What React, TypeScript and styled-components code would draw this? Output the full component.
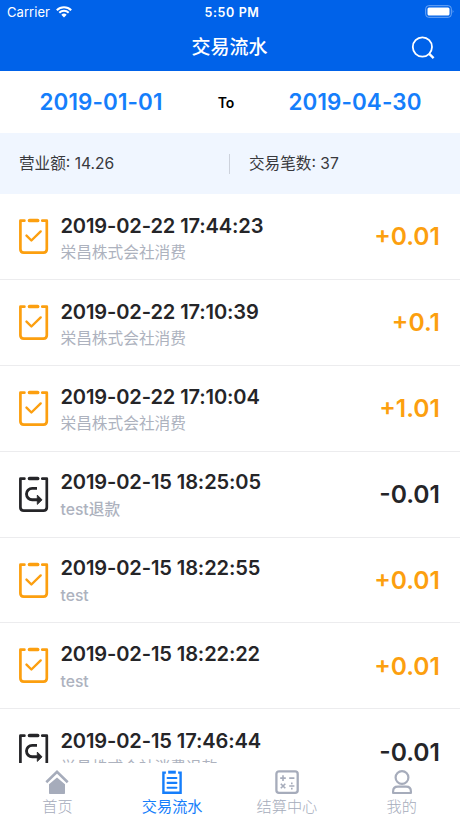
import React from 'react';
import styled, { createGlobalStyle } from 'styled-components';

const ORANGE = '#fc9f0f';
const INK = '#252528';
const MUTED = '#adb2be';
const BLUE = '#157efb';

const GlobalStyle = createGlobalStyle`
  * { box-sizing: border-box; }
  body { margin: 0; background: #fff; }
`;

const Screen = styled.div`
  width: 460px;
  height: 818px;
  overflow: hidden;
  display: flex;
  flex-direction: column;
  background: #fff;
  font-family: Inter, 'Noto Sans CJK SC', sans-serif;
  white-space: nowrap;
`;

const Header = styled.header`
  height: 71px;
  flex: none;
  background: #0062e9;
  color: #fff;
`;

const StatusBar = styled.div`
  height: 24px;
  display: grid;
  grid-template-columns: 1fr auto 1fr;
  align-items: center;
  padding: 0 5px 0 7px;
  font-size: 13px;
`;

const Carrier = styled.div`
  display: flex;
  align-items: center;
  gap: 6px;
  letter-spacing: 0.05px;
`;

const Clock = styled.div`
  font-weight: 600;
  font-size: 12.5px;
  letter-spacing: 0.6px;
  margin-left: 2px;
`;

const Battery = styled.svg`
  justify-self: end;
  margin-top: -2px;
`;

const TitleBar = styled.div`
  height: 47px;
  display: grid;
  grid-template-columns: 1fr auto 1fr;
  align-items: center;
  padding-right: 25px;
  padding-left: 24px;
`;

const Title = styled.h1`
  grid-column: 2;
  margin: 0;
  font-size: 19px;
  line-height: 28px;
  font-weight: 500;
`;

const SearchIcon = styled.svg`
  justify-self: end;
`;

const DateRange = styled.div`
  height: 62px;
  flex: none;
  display: grid;
  grid-template-columns: 202px 48px 1fr;
  align-items: center;
  text-align: center;
`;

const RangeDate = styled.span`
  color: ${BLUE};
  font-size: 22.4px;
  font-weight: 600;
  letter-spacing: 0.12px;
  line-height: 26px;
  margin-top: -1px;
`;

const RangeTo = styled.span`
  font-size: 14px;
  font-weight: 600;
  color: #000;
`;

const Summary = styled.div`
  height: 61px;
  flex: none;
  display: flex;
  align-items: center;
  background: #f0f6ff;
  color: #38393d;
  font-size: 15.6px;
`;

const SummaryCell = styled.div<{ $divided?: boolean }>`
  width: ${p => (p.$divided ? 231 : 229)}px;
  height: 20px;
  line-height: 20px;
  padding-left: 19px;
  border-left: ${p => (p.$divided ? '1px solid #cdd2dc' : '0')};
`;

const List = styled.main`
  flex: 1;
  min-height: 0;
  overflow: hidden;
`;

const Row = styled.article`
  height: 85.9px;
  display: flex;
  align-items: center;
  padding: 0 20px 0 19px;
  border-bottom: 1px solid #ececee;
`;

const Details = styled.div<{ $latin: boolean }>`
  flex: 1;
  align-self: flex-start;
  padding: ${p => (p.$latin ? 17.3 : 18.7)}px 0 0 12px;
`;

const Time = styled.div`
  color: ${INK};
  font-size: 20.1px;
  line-height: 26px;
  font-weight: 600;
  letter-spacing: -0.13px;
  margin-left: -0.6px;
`;

const Note = styled.div<{ $latin: boolean }>`
  color: ${MUTED};
  font-size: 15.7px;
  line-height: ${p => (p.$latin ? 29 : 27)}px;
  font-weight: ${p => (p.$latin ? 500 : 400)};
  margin-left: -0.5px;
`;

const Amount = styled.div<{ $refund: boolean }>`
  color: ${p => (p.$refund ? INK : ORANGE)};
  font-size: 24.6px;
  font-weight: 600;
`;

const TabBar = styled.nav`
  height: 55px;
  flex: none;
  display: grid;
  grid-template-columns: repeat(4, 1fr);
  padding-right: 1px;
`;

const Tab = styled.div<{ $active?: boolean }>`
  display: flex;
  flex-direction: column;
  align-items: center;
  padding-top: 6px;
  color: ${p => (p.$active ? BLUE : '#a6acbb')};
  font-size: 15.2px;
  line-height: 22px;
`;

const TabLabel = styled.span<{ $active?: boolean }>`
  margin-top: 1px;
  font-weight: ${p => (p.$active ? 400 : 300)};
`;

function Clipboard({ refund }: { refund: boolean }) {
  const color = refund ? INK : ORANGE;
  return (
    <svg width="30" height="37" viewBox="0 0 30 37" fill="none" stroke={color} strokeWidth="2.7" strokeLinecap="round" strokeLinejoin="round">
      <path d="M5.4 2.7H1.4v28.6q0 3.4 3.4 3.4h19.6q3.4 0 3.4-3.4V2.7h-4.5" />
      <path d="M10.6 2.5h8" strokeWidth="3.7" />
      {refund ? (
        <>
          <path d="M18 12.4h-4.8a5.7 5.7 0 0 0 0 11.4h6" strokeWidth="2.9" strokeLinecap="butt" />
          <path d="M18.6 19.4l4.4 4.4-4.4 4.3z" fill={color} strokeWidth="1" />
        </>
      ) : (
        <path d="M7.5 17.6l4.9 4.9 9.3-9.1" strokeWidth="2.4" />
      )}
    </svg>
  );
}

const HomeIcon = () => (
  <svg width="24" height="26" viewBox="0 0 24 26">
    <path d="M1.3 13.2L12 2.8l10.7 10.4" fill="none" stroke="currentColor" strokeWidth="2.6" />
    <path d="M4 15.2l8-6.8 8 6.8v9q0 .8-.8.8H4.8q-.8 0-.8-.8z" fill="currentColor" />
  </svg>
);

const RecordsIcon = () => (
  <svg width="24" height="26" viewBox="0 0 24 26" fill="none" stroke="currentColor" strokeWidth="2.4">
    <path d="M5.9 3.6H3.4v20.2h17.2V3.6h-2.5" />
    <path d="M8.2 3.2h7.6" strokeWidth="3" />
    <path d="M7.6 9h8.8M7.6 13.9h8.8M7.6 18.8h8.8" strokeLinecap="round" strokeWidth="2.1" />
  </svg>
);

const SettleIcon = () => (
  <svg width="24" height="26" viewBox="0 0 24 26" fill="none" stroke="currentColor" strokeWidth="1.6">
    <rect x="1.4" y="2.3" width="21.3" height="21.6" rx="2.6" strokeWidth="2.3" />
    <path d="M8 6.3v5.6M5.2 9.1h5.6M14.2 9.1h5.2M5.8 14.7l4.5 4.5m0-4.5l-4.5 4.5M14.2 17h5.2M16 14.4h1.6M16 19.6h1.6" />
  </svg>
);

const ProfileIcon = () => (
  <svg width="24" height="26" viewBox="0 0 24 26" fill="none" stroke="currentColor" strokeWidth="2.2">
    <circle cx="12" cy="8.5" r="6.4" />
    <path d="M3.1 24v-1.5c0-3.2 1.7-4.8 4.7-4.8h8.4c3 0 4.7 1.6 4.7 4.8V24z" strokeLinejoin="round" />
  </svg>
);

const transactions = [
  { time: '2019-02-22 17:44:23', note: '栄昌株式会社消费', amount: '+0.01' },
  { time: '2019-02-22 17:10:39', note: '栄昌株式会社消费', amount: '+0.1' },
  { time: '2019-02-22 17:10:04', note: '栄昌株式会社消费', amount: '+1.01' },
  { time: '2019-02-15 18:25:05', note: 'test退款', amount: '-0.01' },
  { time: '2019-02-15 18:22:55', note: 'test', amount: '+0.01' },
  { time: '2019-02-15 18:22:22', note: 'test', amount: '+0.01' },
  { time: '2019-02-15 17:46:44', note: '栄昌株式会社消费退款', amount: '-0.01' },
];

const tabs = [
  { label: '首页', Icon: HomeIcon },
  { label: '交易流水', Icon: RecordsIcon, active: true },
  { label: '结算中心', Icon: SettleIcon },
  { label: '我的', Icon: ProfileIcon },
];

export default function App() {
  return (
    <Screen>
      <GlobalStyle />
      <Header>
        <StatusBar>
          <Carrier>
            Carrier
            <svg width="16" height="12" viewBox="0 0 16 12" fill="none" stroke="#fff" strokeWidth="2">
              <path d="M.8 4.2a10.2 10.2 0 0 1 14.4 0M3.3 6.8a6.6 6.6 0 0 1 9.4 0" />
              <path d="M5.3 8.7a3.9 3.9 0 0 1 5.4 0L8 11.5z" fill="#fff" stroke="none" />
            </svg>
          </Carrier>
          <Clock>5:50 PM</Clock>
          <Battery width="30" height="13" viewBox="0 0 30 13">
            <rect x=".7" y=".7" width="25.6" height="11.6" rx="3" fill="none" stroke="#6fa8f5" />
            <rect x="2.5" y="2.4" width="22" height="8.2" rx="1.5" fill="#fff" />
            <path d="M27.7 4.8q1.8 1.7 0 3.4z" fill="#6fa8f5" />
          </Battery>
        </StatusBar>
        <TitleBar>
          <Title>交易流水</Title>
          <SearchIcon width="24" height="24" viewBox="0 0 24 24" fill="none" stroke="#fff">
            <circle cx="11.4" cy="11" r="9.6" strokeWidth="1.8" />
            <path d="M18 17.7l4.6 4.4" strokeWidth="2.4" />
          </SearchIcon>
        </TitleBar>
      </Header>
      <DateRange>
        <RangeDate>2019-01-01</RangeDate>
        <RangeTo>To</RangeTo>
        <RangeDate>2019-04-30</RangeDate>
      </DateRange>
      <Summary>
        <SummaryCell>营业额: 14.26</SummaryCell>
        <SummaryCell $divided>交易笔数: 37</SummaryCell>
      </Summary>
      <List>
        {transactions.map(t => {
          const refund = t.amount.startsWith('-');
          const latin = t.note.startsWith('test');
          return (
            <Row key={t.time}>
              <Clipboard refund={refund} />
              <Details $latin={latin}>
                <Time>{t.time}</Time>
                <Note $latin={latin}>{t.note}</Note>
              </Details>
              <Amount $refund={refund}>{t.amount}</Amount>
            </Row>
          );
        })}
      </List>
      <TabBar>
        {tabs.map(({ label, Icon, active }) => (
          <Tab key={label} $active={active}>
            <Icon />
            <TabLabel $active={active}>{label}</TabLabel>
          </Tab>
        ))}
      </TabBar>
    </Screen>
  );
}
